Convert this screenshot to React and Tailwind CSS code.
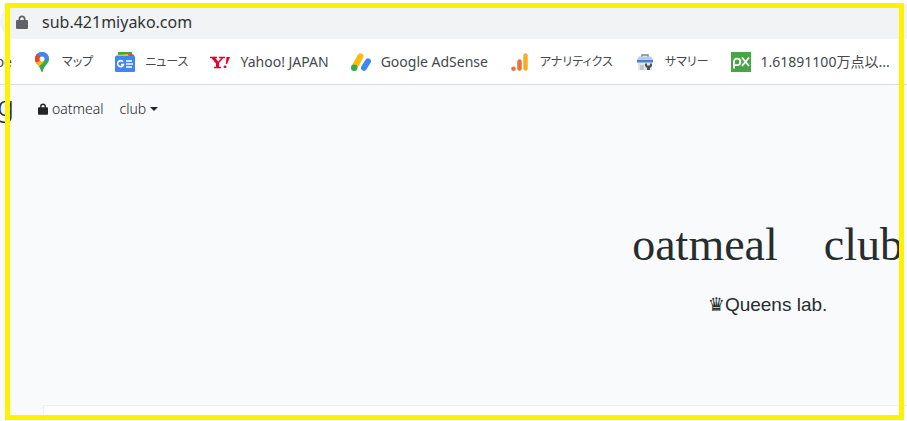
import { useState } from "react";

const MapsIcon = () => (
  <svg viewBox="0 0 20 20" className="w-5 h-5" aria-hidden="true">
    <clipPath id="pin">
      <path d="M10 0C6 0 3 3 3 7c0 5 5 6.500 6 12q1 2 2 0c1-5.500 6-7 6-12 0-4-3-7-7-7z" />
    </clipPath>
    <g clipPath="url(#pin)">
      <rect width="20" height="20" fill="#34a853" />
      <path d="M2 6l3-2 7 6-7 6-5-4z" fill="#fbbc04" />
      <path d="M1 7l4-6 5 6-5 5z" fill="#ea4335" />
      <path d="M6 0h12v4l-6 6-2-3-4-5z" fill="#4285f4" />
      <path d="M3 11l5-2 2 2-5 5z" fill="#fbbc04" />
    </g>
    <circle cx="10" cy="7" r="2.500" fill="#fff" />
  </svg>
);

const NewsIcon = () => (
  <svg viewBox="0 0 20 20" className="w-5 h-5" aria-hidden="true">
    <path d="M3 0h14v8H3z" fill="#34a853" />
    <path d="M11 2h6l2 1v5h-8z" fill="#ea4335" />
    <path d="M1 3l12-1 2 6H1z" fill="#fbbc04" />
    <rect y="4" width="20" height="16" rx="1" fill="#4285f4" />
    <path d="M8 9.800A3 3 0 1 0 8.500 12.500H6" fill="none" stroke="#fff" strokeWidth="1.600" />
    <path d="M11 9h6M11 12h7M11 15h6" stroke="#fff" strokeWidth="1.500" />
  </svg>
);

const YahooIcon = () => (
  <svg viewBox="0 0 20 20" className="w-5 h-5" aria-hidden="true">
    <g fill="none" stroke="#e6002d">
      <path d="M0 5.500h7M9 5.500h6M4 15.500h7" strokeWidth="1.500" />
      <path d="M3 5.500l4.500 5.500v4" strokeWidth="3" />
      <path d="M12.500 6L8 11" strokeWidth="1.500" />
    </g>
    <path d="M16.500 5H20l-3 7h-1.200z" fill="#e6002d" />
    <ellipse cx="15" cy="14.700" rx="1.500" ry="1.300" fill="#e6002d" />
  </svg>
);

const AdSenseIcon = () => (
  <svg viewBox="0 0 20 20" className="w-5 h-5" aria-hidden="true">
    <path d="M3.300 15.500L9.500 4.300" stroke="#fbbc04" strokeWidth="6" strokeLinecap="round" />
    <path d="M13 15.800l4-6.500" stroke="#4285f4" strokeWidth="6" strokeLinecap="round" />
    <circle cx="3.200" cy="15.800" r="3.200" fill="#34a853" />
  </svg>
);

const AnalyticsIcon = () => (
  <svg viewBox="0 0 20 20" className="w-5 h-5" aria-hidden="true">
    <circle cx="3.500" cy="16.700" r="2.300" fill="#e8733a" />
    <path d="M9.500 9.500v7" stroke="#e8733a" strokeWidth="4.500" strokeLinecap="round" />
    <path d="M15.500 3.500v13" stroke="#fbab26" strokeWidth="4.500" strokeLinecap="round" />
  </svg>
);

const SummaryIcon = () => (
  <svg viewBox="0 0 20 20" className="w-5 h-5" aria-hidden="true">
    <path d="M7 5V3h6v2" fill="none" stroke="#80868b" strokeWidth="1.500" />
    <path d="M3 10h14v8H3z" fill="#e3e6e8" />
    <path d="M4 4.500h12l2 3v1H2v-1z" fill="#b4cbe9" />
    <path d="M2 8h16v2.500H2z" fill="#4a80d4" />
    <path d="M5 13h4v5H5z" fill="#c4c8cc" />
    <path d="M10 11.500v2.500l2 2v2h3v-2l2-2v-2.500h-2v2h-3v-2z" fill="#4b4f54" />
  </svg>
);

const PxIcon = () => (
  <svg viewBox="0 0 20 20" className="w-5 h-5" aria-hidden="true">
    <rect width="20" height="20" fill="#48a547" />
    <g fill="none" stroke="#fff" strokeWidth="1.800">
      <path d="M3 16.500V9.500a3.200 3.200 0 1 1 3.200 3.600H4" />
      <path d="M11 5.500l7 8.500M18 5.500L11 14" />
    </g>
  </svg>
);

const BOOKMARKS = [
  { label: "マップ", Icon: MapsIcon, size: "text-xs" },
  { label: "ニュース", Icon: NewsIcon, size: "text-xs" },
  { label: "Yahoo! JAPAN", Icon: YahooIcon, size: "text-sm" },
  { label: "Google AdSense", Icon: AdSenseIcon, size: "text-sm" },
  { label: "アナリティクス", Icon: AnalyticsIcon, size: "text-xs" },
  { label: "サマリー", Icon: SummaryIcon, size: "text-xs" },
  { label: "1.61891100万点以...", Icon: PxIcon, size: "text-sm" },
];

const LockIcon = ({ className }) => (
  <svg viewBox="0 0 12 14" className={className} fill="currentColor" aria-hidden="true">
    <path d="M1 5h1.500V4a3.500 3.500 0 0 1 7 0v1H11a1 1 0 0 1 1 1v7a1 1 0 0 1-1 1H1a1 1 0 0 1-1-1V6a1 1 0 0 1 1-1zm3.200 0h3.600V4a1.800 1.800 0 0 0-3.600 0z" />
  </svg>
);

const AddressBar = () => {
  const [url, setUrl] = useState("sub.421miyako.com");

  return (
    <div className="bg-white pt-1">
      <div className="flex items-center gap-[14px] h-[35px] pl-4 rounded-l-full bg-[#f1f3f4]">
        <LockIcon className="w-3 h-[14px] text-[#5f6368] flex-shrink-0" />
        <input
          type="text"
          aria-label="Address"
          value={url}
          onChange={(e) => setUrl(e.target.value)}
          className="flex-1 min-w-0 bg-transparent text-base text-[#303236] focus:outline-none"
        />
      </div>
    </div>
  );
};

const BookmarkBar = () => (
  <nav className="flex items-center h-[46px] bg-white border-b border-[#dadce0] text-[#45484c] whitespace-nowrap overflow-hidden">
    <a href="#youtube" className="flex justify-end w-3 mr-5 flex-shrink-0 text-sm">be</a>
    <div className="flex items-center gap-[22px]">
      {BOOKMARKS.map(({ label, Icon, size }) => (
        <a key={label} href="#bookmark" className="flex items-center gap-[10px] flex-shrink-0">
          <Icon />
          <span className={size}>{label}</span>
        </a>
      ))}
    </div>
  </nav>
);

const App = () => (
  <div
    className="relative min-h-screen flex flex-col overflow-hidden bg-[#f9fafc]
      font-['Noto_Sans','Noto_Sans_CJK_JP',sans-serif] [font-feature-settings:'palt']"
  >
    <AddressBar />
    <BookmarkBar />

    {/* Site navigation */}
    <header className="flex items-center h-12 text-sm font-light text-[#212529] whitespace-nowrap">
      <a href="#top" className="flex justify-end w-[14px] mr-6 pb-2 text-[28px]">g</a>
      <a href="#home" className="flex items-center gap-1">
        <LockIcon className="w-[10px] h-3 text-[#202628]" />
        oatmeal
      </a>
      <button type="button" className="flex items-center gap-1 ml-4">
        club
        <span className="border-x-4 border-t-4 border-x-transparent border-t-[#202628]" />
      </button>
    </header>

    {/* Hero */}
    <main className="flex-1 flex flex-col pl-[43px] text-[#262d2f]">
      <div className="flex-1 flex flex-col items-center w-max ml-auto pt-[82px] mr-1">
        <h1 className="font-['Liberation_Serif',serif] text-[46px] leading-[60px] whitespace-pre">
          oatmeal{"\u3000"}club
        </h1>
        <p className="mt-4 font-['Liberation_Sans','DejaVu_Sans',sans-serif] text-[19px] leading-7">
          ♛Queens lab.
        </p>
      </div>
      <div className="h-4 bg-white border-t border-l border-[#eceef0]" />
    </main>

    {/* Highlight frame */}
    <div className="absolute top-[3px] bottom-px left-[5px] right-[3px] border-[5px] border-[#fff200] pointer-events-none" />
  </div>
);

export default App;
